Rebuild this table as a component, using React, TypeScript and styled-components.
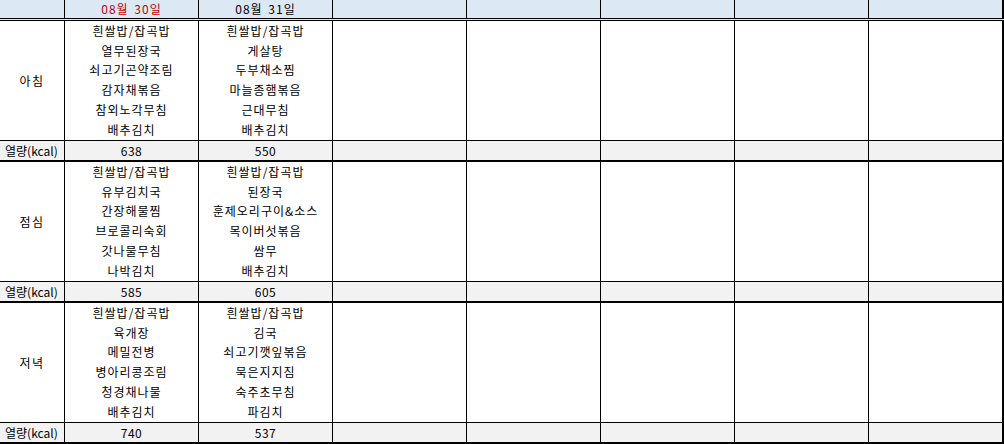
import React from 'react';
import styled, { createGlobalStyle } from 'styled-components';

interface Meal {
  label: string;
  menus: string[][];
  kcal: string[];
}

const days = [
  { text: '08월 30일', holiday: true },
  { text: '08월 31일', holiday: false },
  { text: '', holiday: false },
  { text: '', holiday: false },
  { text: '', holiday: false },
  { text: '', holiday: false },
  { text: '', holiday: false },
];

// 식단 데이터
const meals: Meal[] = [
  {
    label: '아침',
    menus: [
      ['흰쌀밥/잡곡밥', '열무된장국', '쇠고기곤약조림', '감자채볶음', '참외노각무침', '배추김치'],
      ['흰쌀밥/잡곡밥', '게살탕', '두부채소찜', '마늘종햄볶음', '근대무침', '배추김치'],
    ],
    kcal: ['638', '550'],
  },
  {
    label: '점심',
    menus: [
      ['흰쌀밥/잡곡밥', '유부김치국', '간장해물찜', '브로콜리숙회', '갓나물무침', '나박김치'],
      ['흰쌀밥/잡곡밥', '된장국', '훈제오리구이&소스', '목이버섯볶음', '쌈무', '배추김치'],
    ],
    kcal: ['585', '605'],
  },
  {
    label: '저녁',
    menus: [
      ['흰쌀밥/잡곡밥', '육개장', '메밀전병', '병아리콩조림', '청경채나물', '배추김치'],
      ['흰쌀밥/잡곡밥', '김국', '쇠고기깻잎볶음', '묵은지지짐', '숙주초무침', '파김치'],
    ],
    kcal: ['740', '537'],
  },
];

function App() {
  return (
    <>
      <GlobalStyle />
      <Sheet>
        <HeaderRow>
          <Cell />
          {days.map((d, i) => (
            <Cell key={i} $last={i === days.length - 1}>
              <DayText $holiday={d.holiday}>{d.text}</DayText>
            </Cell>
          ))}
        </HeaderRow>
        {meals.map((meal) => (
          <React.Fragment key={meal.label}>
            <MealRow>
              <LabelCell>{meal.label}</LabelCell>
              {days.map((_, i) => (
                <MenuCell key={i} $last={i === days.length - 1}>
                  {(meal.menus[i] || []).map((m) => (
                    <MenuLine key={m}>{m}</MenuLine>
                  ))}
                </MenuCell>
              ))}
            </MealRow>
            <KcalRow>
              <KcalLabel>열량(kcal)</KcalLabel>
              {days.map((_, i) => (
                <KcalCell key={i} $last={i === days.length - 1}>
                  {meal.kcal[i] || ''}
                </KcalCell>
              ))}
            </KcalRow>
          </React.Fragment>
        ))}
      </Sheet>
    </>
  );
}

const GlobalStyle = createGlobalStyle`
  html, body {
    margin: 0;
    padding: 0;
    background: #fff;
  }
  body {
    font-family: "Noto Sans CJK KR", "Noto Sans", sans-serif;
    font-size: 12px;
    color: #000;
  }
`;

const Sheet = styled.div`
  width: 1004px;
  display: flex;
  flex-direction: column;
`;

const Row = styled.div`
  display: grid;
  grid-template-columns: 65px repeat(6, 134px) 135px;
  box-sizing: border-box;
`;

const HeaderRow = styled(Row)`
  height: 21px;
  background: #dde8f5;
  border-bottom: 3px double #000;
`;

const MealRow = styled(Row)`
  height: 120px;
  border-bottom: 1px solid #000;
`;

const KcalRow = styled(Row)`
  height: 21px;
  background: #f2f2f2;
  border-bottom: 2px solid #000;
`;

const Cell = styled.div<{ $last?: boolean }>`
  box-sizing: border-box;
  border-right: ${(p) => (p.$last ? '2px' : '1px')} solid #000;
  display: flex;
  align-items: center;
  justify-content: center;
  line-height: 1;
  white-space: nowrap;
`;

const DayText = styled.span<{ $holiday: boolean }>`
  color: ${(p) => (p.$holiday ? '#c00000' : '#000')};
  letter-spacing: 1px;
  word-spacing: 2px;
`;

const LabelCell = styled(Cell)`
  padding-top: 1px;
  letter-spacing: 1.5px;
`;

const KcalLabel = styled(Cell)`
  justify-content: flex-start;
  padding-left: 5px;
`;

const KcalCell = styled(Cell)`
  letter-spacing: 0.5px;
`;

const MenuCell = styled(Cell)`
  flex-direction: column;
  justify-content: space-evenly;
  align-items: center;
  padding: 0 0 1px;
`;

const MenuLine = styled.div`
  height: 19.8px;
  display: flex;
  align-items: center;
  letter-spacing: 1px;
`;

export default App;
